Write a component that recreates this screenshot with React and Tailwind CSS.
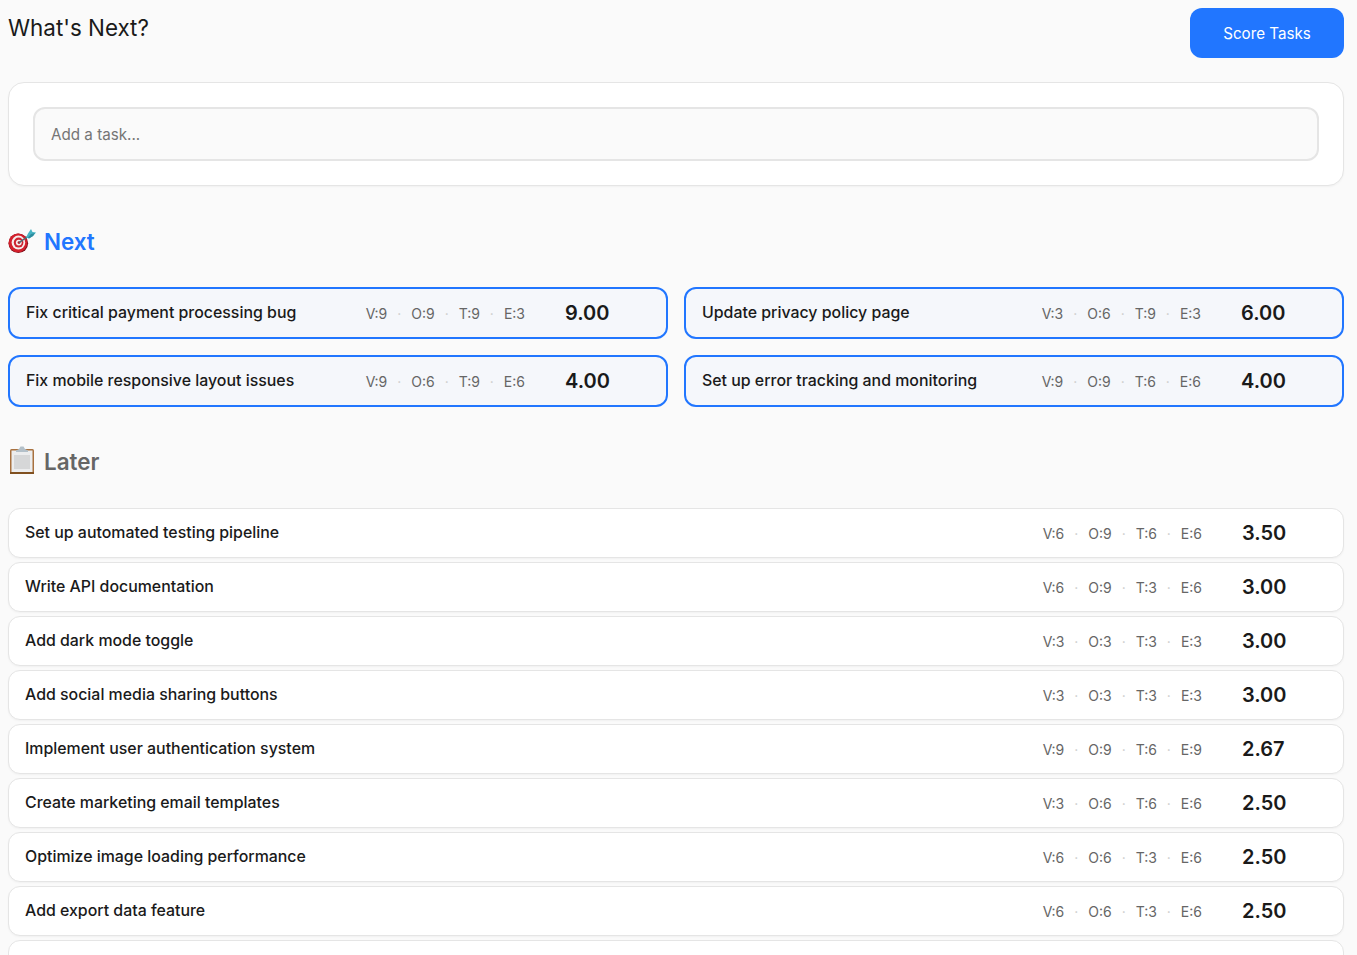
const nextTasks = [
  { name: 'Fix critical payment processing bug', v: 9, o: 9, t: 9, e: 3, score: '9.00' },
  { name: 'Update privacy policy page', v: 3, o: 6, t: 9, e: 3, score: '6.00' },
  { name: 'Fix mobile responsive layout issues', v: 9, o: 6, t: 9, e: 6, score: '4.00' },
  { name: 'Set up error tracking and monitoring', v: 9, o: 9, t: 6, e: 6, score: '4.00' },
];

const laterTasks = [
  { name: 'Set up automated testing pipeline', v: 6, o: 9, t: 6, e: 6, score: '3.50' },
  { name: 'Write API documentation', v: 6, o: 9, t: 3, e: 6, score: '3.00' },
  { name: 'Add dark mode toggle', v: 3, o: 3, t: 3, e: 3, score: '3.00' },
  { name: 'Add social media sharing buttons', v: 3, o: 3, t: 3, e: 3, score: '3.00' },
  { name: 'Implement user authentication system', v: 9, o: 9, t: 6, e: 9, score: '2.67' },
  { name: 'Create marketing email templates', v: 3, o: 6, t: 6, e: 6, score: '2.50' },
  { name: 'Optimize image loading performance', v: 6, o: 6, t: 3, e: 6, score: '2.50' },
  { name: 'Add export data feature', v: 6, o: 6, t: 3, e: 6, score: '2.50' },
];

function TargetIcon() {
  return (
    <svg width="28" height="28" viewBox="0 0 28 28" className="shrink-0">
      <circle cx="10.3" cy="15.3" r="9.8" fill="#7d0f1a" />
      <circle cx="10" cy="14.8" r="9.4" fill="#d3202c" />
      <ellipse cx="10.4" cy="14.6" rx="6.8" ry="7" fill="#f5eeee" />
      <ellipse cx="10.6" cy="14.6" rx="4.8" ry="5" fill="#cf2430" />
      <circle cx="10.8" cy="14.6" r="2.9" fill="#f5eeee" />
      <circle cx="11" cy="14.6" r="1.4" fill="#b81c28" />
      <path d="M11 14.6 L22 7" stroke="#4f6a72" strokeWidth="1.4" />
      <path d="M18 9.5 L20 5.5 L23 1 L24.5 4 L28 4.5 L25 8 L21 10.5 Z" fill="#45b4c4" />
      <path d="M20 9.5 L23 6 L27 5 L25 8 L21 10.5 Z" fill="#2d8c9e" />
    </svg>
  );
}

function ClipboardIcon() {
  return (
    <svg width="28" height="32" viewBox="0 0 28 32" className="shrink-0">
      <rect x="2" y="3" width="24" height="25" rx="1.5" fill="#a8713f" />
      <rect x="3.5" y="4.5" width="21" height="21.5" fill="#ecedee" />
      <rect x="6" y="9" width="16" height="14" fill="#d6d7d8" />
      <path d="M8 4.5 L11 3 L12.5 0.5 L15.5 0.5 L17 3 L20 4.5 L20 6 L8 6 Z" fill="#b3c0c9" />
      <rect x="2" y="26" width="24" height="2" fill="#80501f" />
    </svg>
  );
}

function Metrics({ task }) {
  const items = [`V:${task.v}`, `O:${task.o}`, `T:${task.t}`, `E:${task.e}`];
  return (
    <div className="flex items-center text-[14px] leading-[17px] text-[#666666] shrink-0">
      {items.map((item, i) => (
        <span key={item + i} className="flex items-center">
          {i > 0 && <span className="w-6 text-center text-[#cccccc]">·</span>}
          <span>{item}</span>
        </span>
      ))}
    </div>
  );
}

function TaskRow({ task, next }) {
  return (
    <div
      className={
        next
          ? 'flex items-center h-[52px] px-4 rounded-xl border-2 border-[#2176ff] bg-[#f5f7fb]'
          : 'flex items-center h-[50px] px-4 rounded-xl border border-[#e5e5e5] bg-white shadow-[0_1px_2px_rgba(0,0,0,0.04)]'
      }
    >
      <div className="flex-1 min-w-0 truncate pb-[1px] text-[15.9px] leading-[20px] font-medium text-[#1a1a1a]">{task.name}</div>
      <Metrics task={task} />
      <div className="w-[85px] ml-10 text-[20px] leading-[24px] font-semibold text-[#1a1a1a]">{task.score}</div>
    </div>
  );
}

export default function App() {
  return (
    <div className="h-[955px] overflow-hidden bg-[#fafafa] pt-2 pl-2 pr-[13px] font-['Inter',sans-serif]">
      <header className="flex items-start justify-between mb-6">
        <h1 className="mt-[4px] text-[22.4px] leading-[32px] font-normal text-[#1a1a1a]">What's Next?</h1>
        <button className="w-[154px] h-[50px] pt-[2px] rounded-xl bg-[#2176ff] text-white text-[15.2px]">Score Tasks</button>
      </header>

      <section className="rounded-2xl border border-[#e5e5e5] bg-white p-6 shadow-[0_1px_2px_rgba(0,0,0,0.04)]">
        <input
          placeholder="Add a task..."
          className="block w-full h-[54px] px-4 rounded-xl border-2 border-[#e5e5e5] bg-[#fafafa] text-[15.2px] placeholder:text-[#757575] outline-none"
        />
      </section>

      <h2 className="flex items-center gap-2 mt-10 mb-[29px] h-[32px] text-[22.4px] leading-[32px] font-semibold text-[#2176ff]">
        <TargetIcon />
        <span>Next</span>
      </h2>
      <div className="grid grid-cols-2 gap-4">
        {nextTasks.map((task) => (
          <TaskRow key={task.name} task={task} next />
        ))}
      </div>

      <h2 className="flex items-center gap-2 mt-10 mb-[31px] h-[30px] text-[22.4px] leading-[32px] font-semibold text-[#666666]">
        <ClipboardIcon />
        <span>Later</span>
      </h2>
      <div className="flex flex-col gap-1">
        {laterTasks.map((task) => (
          <TaskRow key={task.name} task={task} />
        ))}
        {/* next row is only just showing at the bottom of the page */}
        <div className="h-[50px] rounded-xl border border-[#e5e5e5] bg-white" />
      </div>
    </div>
  );
}
